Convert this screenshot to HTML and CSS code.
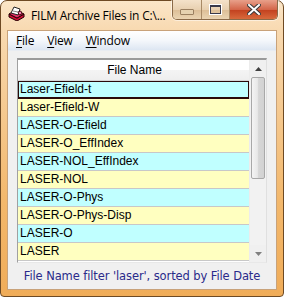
FILE: index.html
```html
<!DOCTYPE html>
<html>
<head>
<meta charset="utf-8">
<link rel="stylesheet" href="styles.css">
</head>
<body>
<div class="window">
  <div class="titlebar">
    <svg class="appicon" width="17" height="15" viewBox="0 0 17 15">
      <path d="M1 8 L9 12 L16 8 L16 11 L9 15 L1 11 Z" fill="#d0103a" stroke="#200" stroke-width="1"/>
      <path d="M1 8 L8 4 L16 8 L9 12 Z" fill="#e8306a" stroke="#200" stroke-width="1"/>
      <path d="M3 7 L6 1 L12 3 L10 9 Z" fill="#fff" stroke="#222" stroke-width="1"/>
      <path d="M5 5 L10 6" stroke="#888" stroke-width="1"/>
      <path d="M10 6 L13 5 L14 8 L11 9 Z" fill="#f080b0" stroke="#300" stroke-width="0.8"/>
    </svg>
    <span class="title">FILM Archive Files in C:\...</span>
    <div class="caption-buttons">
      <div class="cbtn cmin"><span class="minbar"></span></div>
      <div class="cbtn cmax"><span class="maxbox"></span></div>
      <div class="cbtn cclose">
        <svg width="14" height="11" viewBox="0 0 14 11"><path d="M2 1 L12 10 M12 1 L2 10" stroke="#3a3a3a" stroke-width="4" stroke-linecap="square"/><path d="M2 1 L12 10 M12 1 L2 10" stroke="#fff" stroke-width="2" stroke-linecap="square"/></svg>
      </div>
    </div>
  </div>
  <div class="client">
    <div class="menubar">
      <span class="menu"><u>F</u>ile</span>
      <span class="menu"><u>V</u>iew</span>
      <span class="menu"><u>W</u>indow</span>
    </div>
    <div class="body">
      <div class="listbox">
        <div class="listmain">
          <div class="header">File Name</div>
          <div class="rows">
            <div class="row cyan selected">Laser-Efield-t</div>
            <div class="row yellow">Laser-Efield-W</div>
            <div class="row cyan">LASER-O-Efield</div>
            <div class="row yellow">LASER-O_EffIndex</div>
            <div class="row cyan">LASER-NOL_EffIndex</div>
            <div class="row yellow">LASER-NOL</div>
            <div class="row cyan">LASER-O-Phys</div>
            <div class="row yellow">LASER-O-Phys-Disp</div>
            <div class="row cyan">LASER-O</div>
            <div class="row yellow">LASER</div>
          </div>
        </div>
        <div class="scrollbar">
          <div class="sarrow up"><svg width="7" height="4" viewBox="0 0 7 4"><path d="M0 4 L3.5 0 L7 4 Z" fill="#404040"/></svg></div>
          <div class="track"><div class="thumb"></div></div>
          <div class="sarrow down"><svg width="7" height="4" viewBox="0 0 7 4"><path d="M0 0 L3.5 4 L7 0 Z" fill="#808080"/></svg></div>
        </div>
      </div>
      <div class="status">File Name filter 'laser', sorted by File Date</div>
    </div>
  </div>
</div>
</body>
</html>
```
FILE: styles.css
```css
html, body {
  margin: 0;
  padding: 0;
  background: #ffffff;
}
.window {
  width: 284px;
  height: 297px;
  box-sizing: border-box;
  border: 1px solid #6e4a24;
  border-radius: 7px 7px 4px 4px;
  background: linear-gradient(to bottom, #fbe6c8 0px, #f8d9b0 30px, #f6cd98 90px, #f3b86c 200px, #f0ac58 297px);
  display: flex;
  flex-direction: column;
  position: relative;
  font-family: "Liberation Sans", Arial, sans-serif;
}
.titlebar {
  height: 29px;
  display: flex;
  align-items: flex-start;
  position: relative;
}
.appicon {
  margin: 5px 0 0 7px;
}
.title {
  margin: 7px 0 0 6px;
  font-family: "Open Sans", "DejaVu Sans", sans-serif;
  font-size: 12px;
  letter-spacing: -0.2px;
  color: #000;
  line-height: 16px;
}
.caption-buttons {
  position: absolute;
  top: -1px;
  right: 5px;
  height: 19px;
  display: flex;
  border: 1px solid #8a6a48;
  border-top: none;
  border-radius: 0 0 5px 5px;
  overflow: hidden;
  box-shadow: 0 0 0 1px rgba(255,255,255,0.5);
}
.cbtn {
  height: 19px;
  display: flex;
  align-items: center;
  justify-content: center;
}
.cmin, .cmax {
  width: 28px;
  background: linear-gradient(to bottom, #f4e2ca 0%, #e8d0b0 50%, #dcbe96 51%, #ead4b2 100%);
  border-right: 1px solid #a88a66;
}
.cmax { width: 27px; }
.cclose {
  width: 47px;
  background: linear-gradient(to bottom, #e8a08a 0%, #d4664a 50%, #c2401e 51%, #d86a3c 100%);
}
.minbar {
  display: block;
  width: 12px;
  height: 4px;
  margin-top: 4px;
  background: #e6d2b0;
  border: 1px solid #9b8060;
  border-radius: 1px;
}
.maxbox {
  display: block;
  width: 9px;
  height: 6px;
  border: 1px solid #3a3a4a;
  border-top-width: 2px;
  box-shadow: 0 0 0 1px #fff;
  background: transparent;
}
.client {
  flex: 1;
  margin: 0 6px 6px 6px;
  border: 1px solid #c8a27a;
  background: #f0f0f0;
  display: flex;
  flex-direction: column;
}
.menubar {
  height: 19px;
  background: linear-gradient(to bottom, #ffffff 0%, #f4f7fb 50%, #dde6f2 100%);
  display: flex;
  align-items: center;
  padding-left: 8px;
  border-bottom: 1px solid #e8ecf2;
}
.menu {
  font-family: "Open Sans", "DejaVu Sans", sans-serif;
  font-size: 12px;
  color: #000;
  margin-right: 13px;
  letter-spacing: -0.2px;
  line-height: 16px;
}
.menu u { text-decoration-thickness: 1px; text-underline-offset: 2px; }
.body {
  flex: 1;
  display: flex;
  flex-direction: column;
  padding: 7px 9px 0 9px;
}
.listbox {
  height: 205px;
  box-sizing: border-box;
  border: 1px solid #a0a0a0;
  border-top: 2px solid #9a9a9a;
  border-right-color: #e0e0e0;
  border-bottom-color: #e8e8e8;
  background: #ffffff;
  display: flex;
}
.listmain {
  flex: 1;
  display: flex;
  flex-direction: column;
}
.header {
  height: 21px;
  box-sizing: border-box;
  text-align: center;
  font-size: 12px;
  line-height: 21px;
  color: #000;
  background: linear-gradient(to bottom, #ffffff 0%, #ffffff 50%, #f4f4f4 51%, #eeeeee 100%);
  border-bottom: 1px solid #d5d5d5;
  padding-left: 2px;
}
.rows {
  display: flex;
  flex-direction: column;
}
.row {
  height: 18px;
  box-sizing: border-box;
  font-size: 12px;
  line-height: 17px;
  padding-left: 2px;
  color: #000;
  border-bottom: 1px solid #c8c8c8;
}
.cyan { background: #c0ffff; }
.yellow { background: #ffffc0; }
.row.selected {
  border: 1px solid #2a0a0a;
  border-bottom: 2px solid #2a0a0a;
  padding-left: 1px;
  line-height: 15px;
}
.scrollbar {
  width: 16px;
  background: #f0f0f0;
  display: flex;
  flex-direction: column;
  border-left: 1px solid #ececec;
}
.sarrow {
  height: 17px;
  display: flex;
  align-items: center;
  justify-content: center;
}
.track {
  flex: 1;
  background: #f2f2f2;
}
.thumb {
  height: 102px;
  margin: 0 1px;
  box-sizing: border-box;
  border: 1px solid #a8a8a8;
  border-radius: 2px;
  background: linear-gradient(to right, #f4f4f4 0%, #e8e8e8 45%, #d6d6d6 55%, #d2d2d2 100%);
}
.status {
  text-align: center;
  font-family: "DejaVu Sans", Verdana, sans-serif;
  font-size: 11.5px;
  color: #2a2a8a;
  margin-top: 6px;
  line-height: 14px;
  letter-spacing: -0.1px;
}
```
